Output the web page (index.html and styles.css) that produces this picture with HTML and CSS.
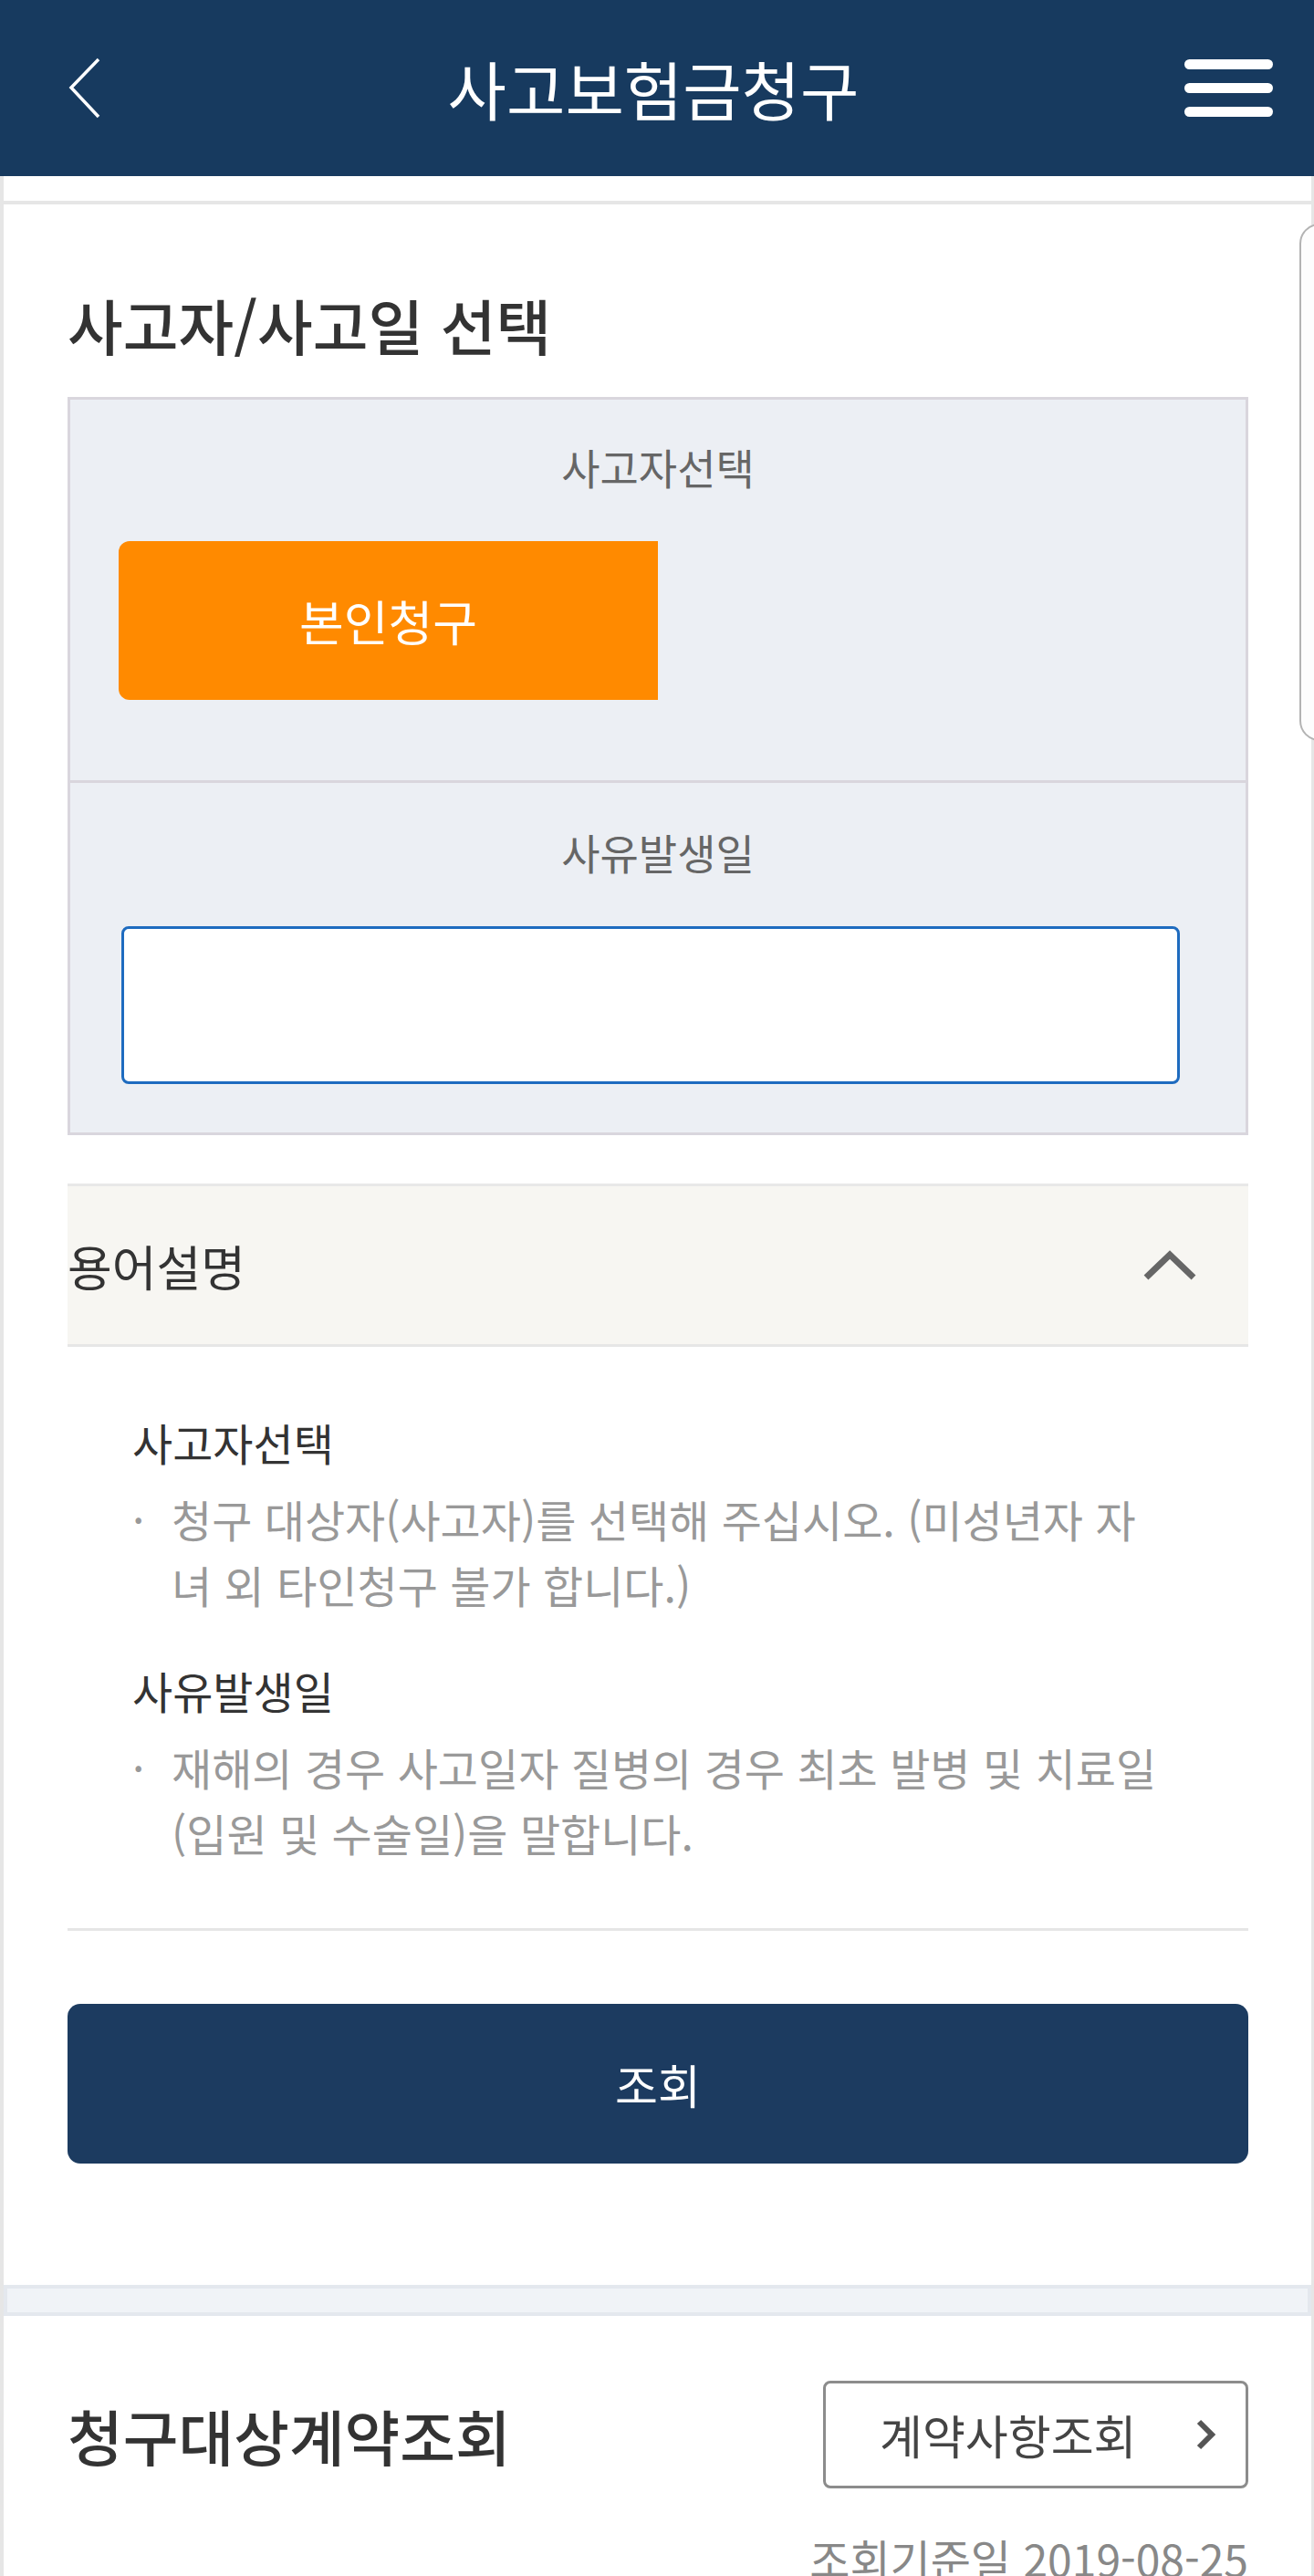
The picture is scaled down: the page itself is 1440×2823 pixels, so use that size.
FILE: index.html
```html
<!DOCTYPE html>
<html lang="ko">
<head>
  <meta charset="utf-8">
  <title>사고보험금청구</title>
  <link rel="stylesheet" href="styles.css">
</head>
<body>

  <header class="top-bar">
    <button class="icon-btn back-btn" aria-label="뒤로">
      <svg width="40" height="70" viewBox="0 0 40 70"><polyline points="34,3 4,34 34,66" fill="none" stroke="#fff" stroke-width="3.5"/></svg>
    </button>
    <h1 class="top-title">사고보험금청구</h1>
    <button class="icon-btn menu-btn" aria-label="메뉴">
      <span></span><span></span><span></span>
    </button>
  </header>

  <div class="page">
    <div class="page-top"></div>

    <!-- 사고자/사고일 선택 -->
    <section class="claim">
      <h2 class="section-title">사고자/사고일 선택</h2>

      <div class="select-box">
        <div class="select-row who-row">
          <p class="row-label">사고자선택</p>
          <button class="who-btn">본인청구</button>
        </div>
        <div class="select-row date-row">
          <p class="row-label">사유발생일</p>
          <input class="date-input" type="text">
        </div>
      </div>

      <div class="terms">
        <div class="terms-head">
          <span>용어설명</span>
          <svg width="60" height="34" viewBox="0 0 60 34"><polyline points="4,30 30,5 56,30" fill="none" stroke="#666" stroke-width="7"/></svg>
        </div>
        <dl class="terms-body">
          <dt>사고자선택</dt>
          <dd><span class="dot">·</span><span>청구 대상자(사고자)를 선택해 주십시오. (미성년자 자녀 외 타인청구 불가 합니다.)</span></dd>
          <dt>사유발생일</dt>
          <dd><span class="dot">·</span><span>재해의 경우 사고일자 질병의 경우 최초 발병 및 치료일 (입원 및 수술일)을 말합니다.</span></dd>
        </dl>
      </div>

      <button class="search-btn">조회</button>
    </section>

    <div class="band"></div>

    <!-- 청구대상계약조회 -->
    <section class="contract">
      <div class="contract-head">
        <h2 class="section-title">청구대상계약조회</h2>
        <button class="contract-btn">
          <span>계약사항조회</span>
          <svg width="30" height="36" viewBox="0 0 30 36"><polyline points="8,4 22,18 8,32" fill="none" stroke="#555" stroke-width="6"/></svg>
        </button>
      </div>
      <p class="base-date">조회기준일 2019-08-25</p>
    </section>

    <div class="side-panel"></div>
  </div>

</body>
</html>
```

FILE: styles.css
```css
body {
  margin: 0;
  font-family: "Noto Sans CJK KR", "Noto Sans", sans-serif;
  color: #333;
  background: #fff;
}

button {
  font-family: inherit;
  cursor: pointer;
}

/* 상단 바 */
.top-bar {
  height: 193px;
  background-color: #173a5f;
  display: flex;
  align-items: center;
  justify-content: space-between;
  padding: 0 45px 0 74px;
}

.icon-btn {
  background: none;
  border: none;
  padding: 0;
}

.back-btn {
  width: 40px;
  height: 70px;
}

.top-title {
  margin: 0 0 0 20px;
  color: #fff;
  font-size: 70px;
  font-weight: 400;
}

.menu-btn {
  width: 97px;
  height: 63px;
  display: flex;
  flex-direction: column;
  justify-content: space-between;
}

.menu-btn span {
  display: block;
  height: 11px;
  border-radius: 6px;
  background-color: #fff;
}

/* 본문 */
.page {
  position: relative;
  border-left: 4px solid #e6e6e6;
  border-right: 3px solid #e6e6e6;
}

.page-top {
  height: 27px;
  border-bottom: 4px solid #e6e6e6;
}

.claim {
  padding: 95px 69px 133px 70px;
}

.section-title {
  margin: 0 0 44px;
  font-size: 66px;
  line-height: 72px;
  font-weight: 500;
  color: #333;
}

.select-box {
  border: 3px solid #d9d6dd;
  background-color: #eceff4;
}

.select-row + .select-row {
  border-top: 3px solid #d9d6dd;
}

.who-row {
  padding: 43px 0 88px 53px;
}

.date-row {
  padding: 45px 0 53px;
}

.row-label {
  margin: 0 0 52px;
  font-size: 46px;
  line-height: 60px;
  color: #666;
  text-align: center;
}

.who-row .row-label {
  margin-left: -53px;
}

.who-btn {
  display: block;
  width: 591px;
  height: 174px;
  border: none;
  border-radius: 12px 0 0 12px;
  background-color: #ff8a00;
  color: #fff;
  font-size: 53px;
}

.date-input {
  display: block;
  box-sizing: border-box;
  width: 1160px;
  height: 173px;
  margin-left: 56px;
  border: 3px solid #1e6bbf;
  border-radius: 8px;
  background-color: #fff;
}

/* 용어설명 */
.terms {
  margin-top: 53px;
}

.terms-head {
  height: 173px;
  border-top: 3px solid #e8e8e8;
  border-bottom: 3px solid #e6e6e6;
  background-color: #f7f6f2;
  display: flex;
  align-items: center;
  justify-content: space-between;
  padding-right: 56px;
  font-size: 53px;
  color: #333;
}

.terms-body {
  margin: 0;
  padding: 74px 90px 69px 71px;
  border-bottom: 3px solid #e6e6e6;
}

.terms-body dt {
  font-size: 48px;
  line-height: 60px;
  color: #333;
}

.terms-body dt + dd + dt {
  margin-top: 50px;
}

.terms-body dd {
  margin: 18px 0 0;
  display: flex;
  font-size: 48px;
  line-height: 72px;
  color: #999;
}

.terms-body .dot {
  flex: 0 0 43px;
}

.search-btn {
  display: block;
  width: 100%;
  height: 175px;
  margin-top: 80px;
  border: none;
  border-radius: 14px;
  background-color: #1c3b60;
  color: #fff;
  font-size: 51px;
}

.band {
  height: 26px;
  border: 4px solid #e4e8ee;
  background-color: #f0f3f7;
}

/* 청구대상계약조회 */
.contract {
  padding: 71px 69px 40px 70px;
}

.contract-head {
  display: flex;
  align-items: center;
  justify-content: space-between;
}

.contract-head .section-title {
  margin: 0;
}

.contract-btn {
  box-sizing: border-box;
  width: 466px;
  height: 118px;
  border: 3px solid #8c8c8c;
  border-radius: 8px;
  background-color: #fff;
  display: flex;
  align-items: center;
  justify-content: space-between;
  padding: 0 29px 0 59px;
  font-size: 51px;
  color: #444;
}

.base-date {
  margin: 46px 0 0;
  text-align: right;
  font-size: 48px;
  line-height: 60px;
  color: #888;
}

/* 오른쪽 떠있는 패널 */
.side-panel {
  position: absolute;
  top: 52px;
  left: 1420px;
  width: 60px;
  height: 563px;
  border: 2px solid #b3b3b3;
  border-radius: 22px;
  background-color: #fdfdfd;
}
```
